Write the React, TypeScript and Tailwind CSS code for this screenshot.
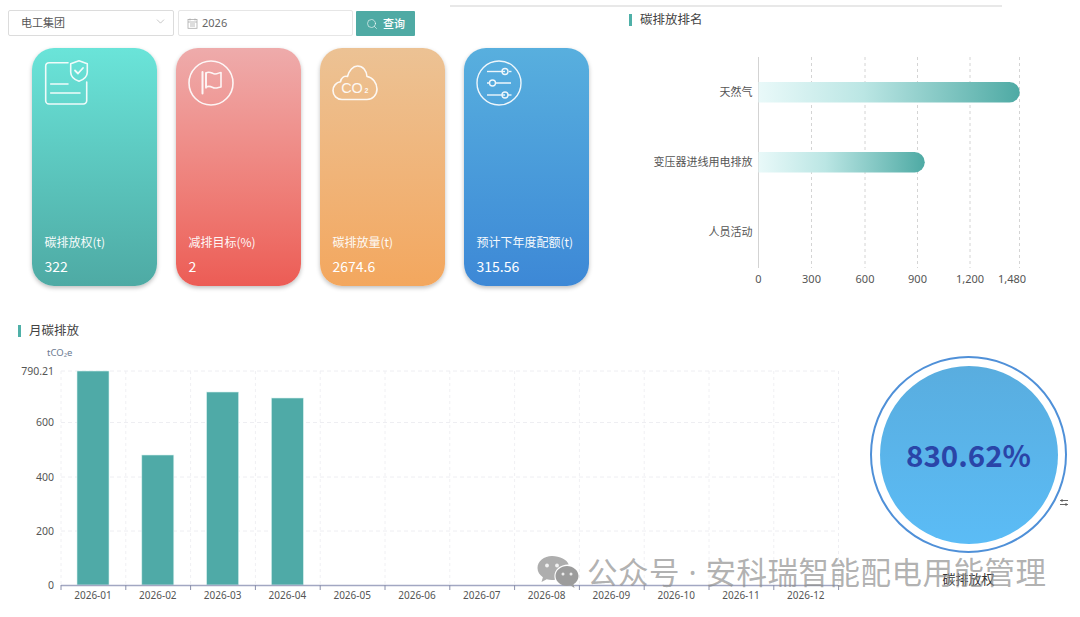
import React from 'react';
import { ChevronDown, Search } from 'lucide-react';

const FONT = 'font-["Noto_Sans","Noto_Sans_CJK_SC",sans-serif]';
const CJK_FONT = 'font-["Noto_Sans_CJK_SC","Noto_Sans",sans-serif]';

const DocShieldIcon = () => (
  <svg width="46" height="48" viewBox="0 0 46 48" fill="none" stroke="#fff" strokeWidth="1.6" strokeLinecap="round" strokeLinejoin="round" className="opacity-90">
    <path d="M24 3.7H5a3.3 3.3 0 0 0-3.3 3.3v34.7A3.3 3.3 0 0 0 5 45h34.4a3.3 3.3 0 0 0 3.3-3.3V23" />
    <path d="M6.7 25H24M6.7 34H36" />
    <path d="M35 1.7l8.3 3v8.6c0 4-3.4 7.2-8.3 9-4.9-1.8-8.3-5-8.3-9V4.700z" />
    <path d="M31 11.500l3 3 5-5.500" strokeWidth="1.800" />
  </svg>
);

const FlagIcon = () => (
  <svg width="46" height="46" viewBox="0 0 46 46" fill="none" stroke="#fff" strokeWidth="1.6" strokeLinecap="round" strokeLinejoin="round" className="opacity-90">
    <circle cx="23" cy="23" r="22" />
    <path d="M14.500 12v21.500" strokeWidth="2" />
    <path d="M18 13c4-2.500 6 1 9 1 3 0 4-1.500 6-1.500V27c-2 0-3 1-6 1-3 0-4-3-9-1z" />
    <path d="M18 13v15" />
  </svg>
);

const CloudIcon = () => (
  <svg width="46" height="36" viewBox="0 0 46 36" fill="none" stroke="#fff" strokeWidth="1.6" strokeLinejoin="round" className="opacity-90">
    <path d="M10 34.500C4.800 34.500 1 30.500 1 25.500c0-4.600 3.300-8.200 7.500-8.800C9.500 12.500 12.500 10.800 15.500 11.500 17 5.500 21 1 25.500 1c5.500 0 9 4.500 9.500 10.500 5.500.8 10 6.200 10 12.500 0 6-4.500 10.500-10 10.500z" />
    <text x="20" y="27.500" textAnchor="middle" fontSize="14.500" fontFamily="Liberation Sans, sans-serif" fill="#fff" stroke="none">CO</text>
    <text x="32.500" y="28" fontSize="7" fontWeight="700" fontFamily="Liberation Sans, sans-serif" fill="#fff" stroke="none">2</text>
  </svg>
);

const SlidersIcon = () => (
  <svg width="46" height="46" viewBox="0 0 46 46" fill="none" stroke="#fff" strokeWidth="1.4" className="opacity-90">
    <circle cx="23" cy="23" r="22" />
    <path d="M11 11.500h18" />
    <circle cx="29" cy="11.500" r="3" />
    <path d="M33 11.500h2.500" />
    <path d="M11 23h3M19.500 23H35" />
    <circle cx="16.500" cy="23" r="3" />
    <path d="M11 35h18" />
    <circle cx="29" cy="35" r="3" />
    <path d="M32 35h3.500" />
  </svg>
);

const cards = [
  { label: '碳排放权(t)', value: '322', cls: 'from-[#6ae4d9] to-[#4eaaa4]', icon: <DocShieldIcon />, pad: 'pl-[12px] pt-[11px]' },
  { label: '减排目标(%)', value: '2', cls: 'from-[#eeabab] to-[#ec5c55]', icon: <FlagIcon />, pad: 'pl-[12px] pt-[12px]' },
  { label: '碳排放量(t)', value: '2674.6', cls: 'from-[#ecc294] to-[#f3a75e]', icon: <CloudIcon />, pad: 'pl-[12px] pt-[17px]' },
  { label: '预计下年度配额(t)', value: '315.56', cls: 'from-[#58afde] to-[#3d88d6]', icon: <SlidersIcon />, pad: 'pl-[12px] pt-[12px]' },
];

const SectionTitle = ({ text }: { text: string }) => (
  <div className="flex items-center gap-[8px] h-[14px]">
    <span className="w-[3px] h-[12px] bg-[#4fb0a8]" />
    <span className="text-[12.500px] leading-[14px] text-[#444]">{text}</span>
  </div>
);

const RankChart = () => {
  const ticks = [
    { x: 0, tx: 0, label: '0' },
    { x: 53, tx: 53, label: '300' },
    { x: 106.500, tx: 106.500, label: '600' },
    { x: 159, tx: 159, label: '900' },
    { x: 211.500, tx: 211.500, label: '1,200' },
    { x: 261, tx: 253.500, label: '1,480' },
  ];
  return (
    <svg width="420" height="240" viewBox="0 0 420 240">
      <defs>
        <linearGradient id="rank" x1="0" y1="0" x2="1" y2="0">
          <stop offset="0" stopColor="#e9f9f9" />
          <stop offset="0.4" stopColor="#bbe6e4" />
          <stop offset="1" stopColor="#4eaaa4" />
        </linearGradient>
      </defs>
      <g transform="translate(133.500 0)">
        {ticks.slice(1).map((t) => (
          <line key={t.x} x1={t.x} x2={t.x} y1="0" y2="211" stroke="#d4d4d4" strokeDasharray="3 3" />
        ))}
        <line x1="0" x2="0" y1="0" y2="211" stroke="#d3d3d3" />
        <path d="M0 25h251a10 10 0 0 1 0 20.500H0z" fill="url(#rank)" />
        <path d="M0 95h156a10 10 0 0 1 0 20.500H0z" fill="url(#rank)" />
        <g fontSize="11" fill="#555" textAnchor="end">
          <text x="-6" y="38.500">天然气</text>
          <text x="-6" y="108.500">变压器进线用电排放</text>
          <text x="-6" y="179">人员活动</text>
        </g>
        <g fontSize="11" fill="#555" textAnchor="middle">
          {ticks.map((t) => (
            <text key={t.x} x={t.tx} y="226">{t.label}</text>
          ))}
        </g>
      </g>
    </svg>
  );
};

const MonthChart = () => {
  const bars = [214, 130, 193, 187];
  const step = 64.800;
  const months = ['01', '02', '03', '04', '05', '06', '07', '08', '09', '10', '11', '12'];
  const rows = [
    { y: 14, label: '790.21' },
    { y: 65.500, label: '600' },
    { y: 120, label: '400' },
    { y: 174, label: '200' },
    { y: 228, label: '0' },
  ];
  return (
    <svg width="850" height="250" viewBox="0 0 850 250">
      <g fontSize="10.500" fill="#555" textAnchor="end">
        {rows.map((r) => (
          <text key={r.label} x="54" y={r.y + 3.500}>{r.label}</text>
        ))}
      </g>
      {rows.slice(0, 4).map((r) => (
        <line key={r.y} x1="61" x2="838" y1={r.y} y2={r.y} stroke="#eeeef2" strokeDasharray="4 3" />
      ))}
      {months.map((m, i) => (
        <line key={m} x1={61 + step * i} x2={61 + step * i} y1="14" y2="228" stroke="#f0f0f3" strokeDasharray="3 3" />
      ))}
      <line x1="838.500" x2="838.500" y1="14" y2="228" stroke="#eeeef2" strokeDasharray="3 3" />
      {bars.map((h, i) => (
        <rect key={i} x={77 + step * i} y={228 - h} width="32" height={h} fill="#4faaa7" stroke="#d8f0ee" strokeWidth="0.600" />
      ))}
      <line x1="61" x2="838" y1="228.500" y2="228.500" stroke="#a2a7c2" strokeWidth="1.500" />
      {[...months, 'end'].map((m, i) => (
        <line key={m} x1={61 + step * i} x2={61 + step * i} y1="228" y2="233" stroke="#8a90ac" />
      ))}
      <g fontSize="10" fill="#555" textAnchor="middle">
        {months.map((m, i) => (
          <text key={m} x={93 + step * i} y="242">2026-{m}</text>
        ))}
      </g>
    </svg>
  );
};

const WeChatIcon = () => (
  <svg width="42" height="34" viewBox="0 0 42 34">
    <path d="M15 1C7 1 .5 6.300.5 13c0 3.800 2.100 7 5.400 9.200L4.500 27l5.200-2.700c1.700.5 3.500.8 5.300.8 1 0 2-.1 3-.3-.4-1.200-.6-2.400-.6-3.700 0-6.500 6-11.500 13.400-11.500h.9C30 4.500 23 1 15 1z" fill="#aeaeae" />
    <circle cx="10" cy="10.500" r="1.900" fill="#f2f2f2" />
    <circle cx="20" cy="10.500" r="1.900" fill="#f2f2f2" />
    <path d="M41.500 21c0-5.600-5.400-10-11.500-10s-11.500 4.400-11.500 10 5.400 10 11.500 10c1.300 0 2.500-.2 3.700-.5l3.800 2.500-1-3.700c3-1.900 5-4.800 5-8.300z" fill="#9c9c9c" />
    <circle cx="26" cy="19" r="1.500" fill="#ececec" />
    <circle cx="34" cy="19" r="1.500" fill="#ececec" />
  </svg>
);

export default function App() {
  return (
    <div className={`relative w-[1080px] h-[617px] overflow-hidden bg-white ${FONT}`}>
      <div className="flex h-[312px]">
        {/* left: filters and cards */}
        <div className="w-[625px] shrink-0 pl-[8px] pt-[10px]">
          <div className="flex items-start">
            <div className="flex items-center justify-between w-[166px] h-[26px] border border-[#dcdcdc] rounded-[2px] pl-[12px] pr-[6px] pt-[1px] text-[11px] text-[#555]">
              电工集团
              <ChevronDown size={13} strokeWidth={1} className="text-[#999] mb-[5px]" />
            </div>
            <div className="flex items-center gap-[5px] w-[175px] h-[26px] ml-[4px] border border-[#e6e6e6] rounded-[2px] pl-[8px] pt-[1px] text-[11px] text-[#666]">
              <svg width="11" height="11" viewBox="0 0 11 11" fill="none" stroke="#aaa" strokeWidth="0.800">
                <rect x="1" y="1.500" width="9" height="8.800" />
                <path d="M1 4h9M3 6h5M3 8h5M3 .5v2M8 .5v2" />
              </svg>
              <span className="-ml-[1px]">2026</span>
            </div>
            <div className="flex items-center justify-center gap-[5px] w-[59px] h-[25px] mt-[1px] ml-[3px] bg-[#4faaa4] rounded-[1px] pt-[1px] text-[11px] font-medium text-white">
              <Search size={12} strokeWidth={1.200} />
              查询
            </div>
          </div>
          <div className="flex gap-[19px] mt-[12px] ml-[24px]">
            {cards.map((c) => (
              <div key={c.label} className={`flex flex-col justify-between w-[125px] h-[238px] rounded-[22px] bg-gradient-to-b shadow-[0_2px_4px_rgba(0,0,0,0.25)] ${c.cls} ${c.pad}`}>
                <div>{c.icon}</div>
                <div className={`pl-[0.500px] pb-[11px] text-white ${CJK_FONT}`}>
                  <div className="text-[12px] leading-[16px] opacity-95">{c.label}</div>
                  <div className="mt-[7px] text-[14px] leading-[18px]">{c.value}</div>
                </div>
              </div>
            ))}
          </div>
        </div>
        {/* right: ranking chart */}
        <div className="flex-1">
          <div className="flex">
            <div className="w-[552px] h-[2px] mt-[5px] -ml-[175px] shrink-0 bg-[#e8e8e8]" />
          </div>
          <div className="pl-[4px] mt-[6px]">
            <SectionTitle text="碳排放排名" />
          </div>
          <div className="mt-[30px]">
            <RankChart />
          </div>
        </div>
      </div>
      {/* bottom: monthly chart and gauge */}
      <div className="flex">
        <div className="w-[850px] shrink-0">
          <div className="pl-[18px] pt-[12px]">
            <SectionTitle text="月碳排放" />
          </div>
          <div className="pl-[47px] mt-[8px] text-[9.500px] leading-[14px] text-[#6b7a90]">tCO₂e</div>
          <div className="-mt-[3px]">
            <MonthChart />
          </div>
        </div>
        <div className="flex flex-col items-center pl-[20px] pt-[44px]">
          <div className="flex items-center justify-center w-[197px] h-[197px] rounded-full border-[2.500px] border-[#4f90d8] shrink-0">
            <div className="flex items-center justify-center w-[178px] h-[178px] rounded-full bg-gradient-to-b from-[#59addf] to-[#5bbcf6]">
              <span className={`text-[29.500px] leading-[36px] font-semibold text-[#2a45a8] -mt-[1px] ${CJK_FONT}`}>830.62%</span>
            </div>
          </div>
          <div className="mt-[17px] text-[13px] leading-[18px] text-[#333]">碳排放权</div>
        </div>
      </div>
      {/* overlays */}
      <div className="absolute left-[1058px] top-[496px] flex items-center justify-center w-[11px] h-[12px] bg-white rounded-[2px]">
        <svg width="8" height="7" viewBox="0 0 8 7" fill="none" stroke="#555" strokeWidth="0.900">
          <path d="M0 1.500h8M0 5.500h8M2 0v3M6 4v3" />
        </svg>
      </div>
      <div className="absolute left-[537px] top-[555px] flex items-center gap-[8px] pointer-events-none">
        <WeChatIcon />
        <span className="text-[30.500px] leading-[30px] text-[#8f8f8f]/70 tracking-[0.500px] whitespace-nowrap">公众号 · 安科瑞智能配电用能管理</span>
      </div>
    </div>
  );
}
